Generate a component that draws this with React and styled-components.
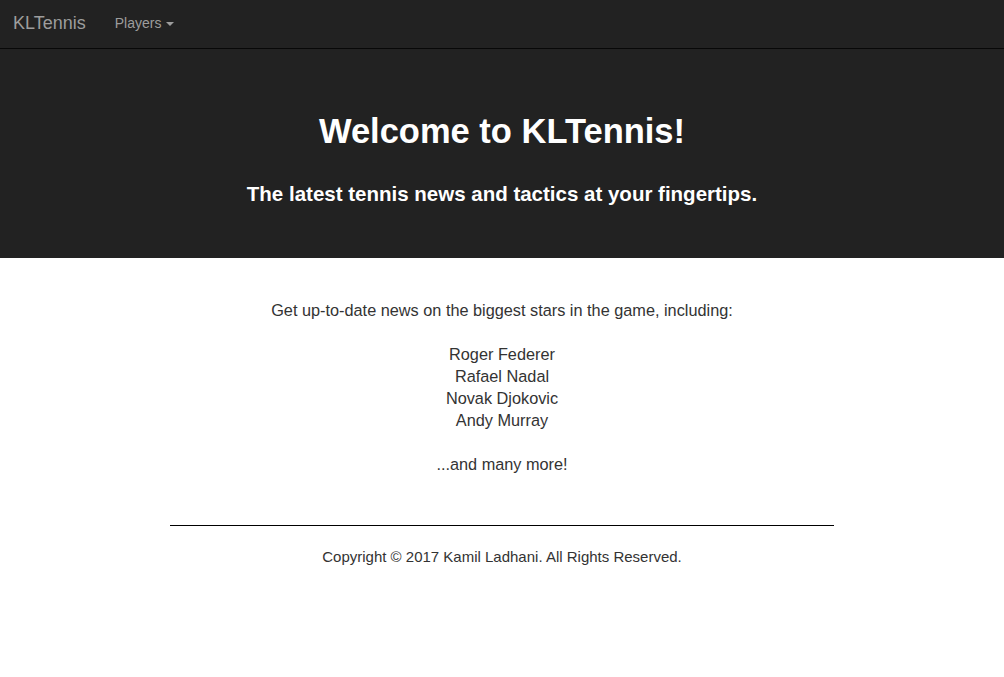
import React from "react";
import styled, { createGlobalStyle } from "styled-components";

const Global = createGlobalStyle`
  body {
    margin: 0;
    font-family: "Liberation Sans", Arial, sans-serif;
    background: #fff;
    color: #333;
  }
`;

const Navbar = styled.nav`
  height: 48px;
  background: #222;
  border-bottom: 1px solid #080808;
  display: flex;
  align-items: center;
  padding: 0 13px;
  gap: 29px;
`;

const Brand = styled.a`
  font-size: 18px;
  color: #9d9d9d;
  text-decoration: none;
  margin-top: -2px;
`;

const NavLink = styled.a`
  font-size: 14px;
  color: #9d9d9d;
  display: flex;
  align-items: center;
  gap: 5px;
  margin-top: -2px;
`;

const Caret = styled.span`
  width: 0;
  height: 0;
  border-top: 4px solid #9d9d9d;
  border-left: 4px solid transparent;
  border-right: 4px solid transparent;
  margin-top: 1px;
`;

const Jumbotron = styled.header`
  background: #222;
  height: 209px;
  display: flex;
  flex-direction: column;
  align-items: center;
  color: #fff;
`;

const Title = styled.h1`
  margin: 62px 0 0;
  font-size: 34.5px;
  font-weight: bold;
  line-height: 40px;
`;

const Subtitle = styled.h3`
  margin: 29px 0 0;
  font-size: 20.5px;
  font-weight: bold;
  line-height: 28px;
`;

const Main = styled.main`
  text-align: center;
  font-size: 16.3px;
  line-height: 22px;
  padding-top: 41px;
`;

const Para = styled.p`
  margin: 0 0 22px;
`;

const Footer = styled.footer`
  width: 664px;
  margin: 50px auto 0;
  border-top: 1px solid #000;
  padding-top: 22px;
  text-align: center;
  font-size: 15px;
`;

export default function App() {
  return (
    <>
      <Global />
      <Navbar>
        <Brand>KLTennis</Brand>
        <NavLink>
          Players <Caret />
        </NavLink>
      </Navbar>
      <Jumbotron>
        <Title>Welcome to KLTennis!</Title>
        <Subtitle>The latest tennis news and tactics at your fingertips.</Subtitle>
      </Jumbotron>
      <Main>
        <Para>Get up-to-date news on the biggest stars in the game, including:</Para>
        <Para>
          Roger Federer
          <br />
          Rafael Nadal
          <br />
          Novak Djokovic
          <br />
          Andy Murray
        </Para>
        <Para>...and many more!</Para>
      </Main>
      <Footer>Copyright © 2017 Kamil Ladhani. All Rights Reserved.</Footer>
    </>
  );
}
